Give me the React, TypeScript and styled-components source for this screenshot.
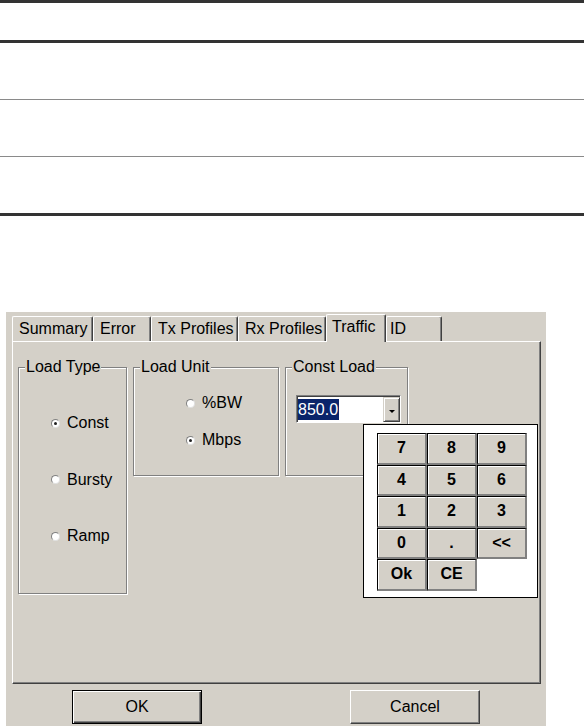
import styled, { createGlobalStyle } from "styled-components";

const GlobalStyle = createGlobalStyle`
  html, body {
    margin: 0;
    padding: 0;
    background: #ffffff;
  }
  body {
    font-family: "Liberation Sans", Arial, sans-serif;
    font-size: 16px;
    color: #000000;
  }
`;

const Page = styled.div`
  width: 584px;
  height: 726px;
  overflow: hidden;
`;

/* empty table above the dialog */
const Table = styled.div`
  border-top: 3px solid #333333;
  border-bottom: 3px solid #333333;
`;

const TableHead = styled.div`
  height: 37px;
  border-bottom: 3px solid #333333;
`;

const TableRow = styled.div<{ $last?: boolean }>`
  height: 56px;
  border-bottom: ${(p) => (p.$last ? "none" : "1px solid #8a8a8a")};
`;

const Dialog = styled.div`
  box-sizing: border-box;
  margin: 96px 0 0 6px;
  width: 540px;
  height: 414px;
  padding: 2px 5px 0 6px;
  background: #d4d0c8;
  line-height: 18px;
`;

const TabRow = styled.div`
  display: flex;
  align-items: flex-end;
  height: 27px;
`;

const Tab = styled.div<{ $w: number; $active?: boolean; $pad?: number }>`
  box-sizing: border-box;
  position: relative;
  z-index: ${(p) => (p.$active ? 1 : 0)};
  width: ${(p) => p.$w}px;
  height: ${(p) => (p.$active ? 28 : 25)}px;
  margin-bottom: ${(p) => (p.$active ? -1 : 0)}px;
  padding: 3px 0 0 ${(p) => p.$pad ?? 6}px;
  background: #d4d0c8;
  border-top: 1px solid #ffffff;
  border-left: 1px solid #ffffff;
  border-right: 1px solid #404040;
  border-radius: 2px 2px 0 0;
  box-shadow: inset -1px 0 #808080;
  white-space: nowrap;
`;

const Panel = styled.div`
  box-sizing: border-box;
  position: relative;
  height: 343px;
  padding: 16px 0 0 5px;
  border-top: 1px solid #ffffff;
  border-left: 1px solid #ffffff;
  border-right: 1px solid #404040;
  border-bottom: 1px solid #404040;
  box-shadow: inset -1px -1px #808080;
  display: flex;
  align-items: flex-start;
  gap: 6px;
`;

const GroupBox = styled.fieldset<{ $w: number }>`
  box-sizing: border-box;
  width: ${(p) => p.$w}px;
  min-width: 0;
  margin: 0;
  padding: 0;
  border: 1px solid #808080;
  box-shadow: inset 1px 1px #ffffff, 1px 1px #ffffff;
`;

const Legend = styled.legend`
  margin-left: 6px;
  padding: 0 1px;
  line-height: 18px;
  background: #d4d0c8;
`;

const RadioList = styled.div<{ $pad: string; $gap: number }>`
  display: flex;
  flex-direction: column;
  padding: ${(p) => p.$pad};
  gap: ${(p) => p.$gap}px;
`;

const RadioRow = styled.label`
  display: flex;
  align-items: center;
  gap: 7px;
  height: 18px;
`;

const RadioDot = styled.span<{ $on?: boolean }>`
  box-sizing: border-box;
  width: 9px;
  height: 9px;
  border-radius: 50%;
  border: 1px solid;
  border-color: #808080 #e0e0e0 #e0e0e0 #808080;
  background: #ffffff;
  display: flex;
  align-items: center;
  justify-content: center;
  &::after {
    content: "";
    width: 3px;
    height: 3px;
    border-radius: 50%;
    background: ${(p) => (p.$on ? "#202020" : "transparent")};
  }
`;

const ComboWrap = styled.div`
  padding: 19px 0 52px 10px;
`;

const Combo = styled.div`
  box-sizing: border-box;
  display: flex;
  width: 105px;
  height: 28px;
  border: 1px solid;
  border-color: #808080 #ffffff #ffffff #808080;
  box-shadow: inset 1px 1px #404040;
  padding: 1px 0 0 1px;
`;

const ComboField = styled.div`
  flex: 1;
  background: #ffffff;
  display: flex;
  align-items: center;
`;

const Selected = styled.span`
  background: #0a246a;
  color: #ffffff;
  line-height: 21px;
  padding-right: 1px;
`;

const DropButton = styled.div`
  box-sizing: border-box;
  width: 17px;
  border: 1px solid;
  border-color: #d4d0c8 #404040 #404040 #d4d0c8;
  box-shadow: inset 1px 1px #ffffff, inset -1px -1px #808080;
  background: #d4d0c8;
  display: flex;
  align-items: center;
  justify-content: center;
  &::after {
    content: "";
    margin-top: 3px;
    border-left: 3px solid transparent;
    border-right: 3px solid transparent;
    border-top: 3px solid #000000;
  }
`;

const Keypad = styled.div`
  position: absolute;
  left: 350px;
  top: 82px;
  box-sizing: border-box;
  width: 175px;
  height: 174px;
  padding: 8px 0 0 13px;
  background: #ffffff;
  border: 1px solid #000000;
  display: grid;
  grid-template-columns: repeat(3, 50px);
  grid-auto-rows: 31.5px;
  align-content: start;
`;

const Key = styled.div`
  box-sizing: border-box;
  display: flex;
  align-items: center;
  justify-content: center;
  background: #d4d0c8;
  border-top: 1px solid #000000;
  border-left: 1px solid #000000;
  border-right: 2px solid #808080;
  border-bottom: 2px solid #808080;
  box-shadow: inset 1px 1px #ffffff;
  font-weight: bold;
  font-size: 16px;
`;

const ButtonRow = styled.div`
  display: flex;
  gap: 148px;
  margin-top: 6px;
  padding-left: 60px;
`;

const DialogButton = styled.div<{ $default?: boolean }>`
  box-sizing: border-box;
  width: 130px;
  height: 34px;
  display: flex;
  align-items: center;
  justify-content: center;
  background: #d4d0c8;
  border: 1px solid;
  border-color: ${(p) =>
    p.$default ? "#000000" : "#ffffff #404040 #404040 #ffffff"};
  box-shadow: ${(p) =>
    p.$default
      ? "inset 1px 1px #ffffff, inset -1px -1px #404040, inset -2px -2px #808080"
      : "inset -1px -1px #808080"};
`;

const tabs = [
  { label: "Summary", w: 81, pad: 6 },
  { label: "Error", w: 58, pad: 6 },
  { label: "Tx Profiles", w: 87, pad: 6 },
  { label: "Rx Profiles", w: 88, pad: 6 },
  { label: "Traffic", w: 60, pad: 5, active: true },
  { label: "ID", w: 56, pad: 3 },
];

const keys = ["7", "8", "9", "4", "5", "6", "1", "2", "3", "0", ".", "<<", "Ok", "CE"];

export default function App() {
  return (
    <Page>
      <GlobalStyle />
      <Table>
        <TableHead />
        <TableRow />
        <TableRow />
        <TableRow $last />
      </Table>

      <Dialog>
        <TabRow>
          {tabs.map((t) => (
            <Tab key={t.label} $w={t.w} $pad={t.pad} $active={t.active}>
              {t.label}
            </Tab>
          ))}
        </TabRow>

        <Panel>
          <GroupBox $w={109}>
            <Legend>Load Type</Legend>
            <RadioList $pad="38px 0 48px 32px" $gap={38.5}>
              <RadioRow>
                <RadioDot $on />
                Const
              </RadioRow>
              <RadioRow>
                <RadioDot />
                Bursty
              </RadioRow>
              <RadioRow>
                <RadioDot />
                Ramp
              </RadioRow>
            </RadioList>
          </GroupBox>

          <GroupBox $w={146}>
            <Legend>Load Unit</Legend>
            <RadioList $pad="18px 0 26px 52px" $gap={19}>
              <RadioRow>
                <RadioDot />
                %BW
              </RadioRow>
              <RadioRow>
                <RadioDot $on />
                Mbps
              </RadioRow>
            </RadioList>
          </GroupBox>

          <GroupBox $w={123}>
            <Legend>Const Load</Legend>
            <ComboWrap>
              <Combo>
                <ComboField>
                  <Selected>850.0</Selected>
                </ComboField>
                <DropButton />
              </Combo>
            </ComboWrap>
          </GroupBox>

          <Keypad>
            {keys.map((k) => (
              <Key key={k}>{k}</Key>
            ))}
          </Keypad>
        </Panel>

        <ButtonRow>
          <DialogButton $default>OK</DialogButton>
          <DialogButton>Cancel</DialogButton>
        </ButtonRow>
      </Dialog>
    </Page>
  );
}
